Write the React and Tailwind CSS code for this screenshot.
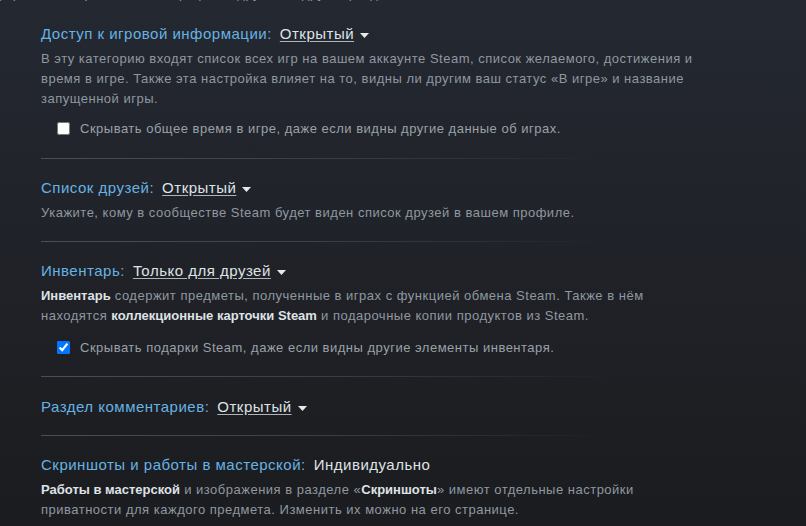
import React from "react";

const Caret = () => (
  <svg width="9" height="5" viewBox="0 0 9 5" className="ml-[6px] mt-[3px]">
    <path d="M0 0 L9 0 L4.5 5 Z" fill="#e6e8ea" />
  </svg>
);

const Title = ({ label, value, dropdown = true }) => (
  <div className="flex items-center text-[15px] leading-[20px] tracking-[0.5px]">
    <span className="text-[#66b3e3]">{label}</span>
    {dropdown ? (
      <span className="flex items-center ml-2">
        <span className="text-[#dfe3e6] underline underline-offset-[2px] decoration-[#aeb4b9]">
          {value}
        </span>
        <Caret />
      </span>
    ) : (
      <span className="ml-2 text-[#dfe3e6]">{value}</span>
    )}
  </div>
);

const Divider = () => (
  <div className="h-px w-[570px] bg-gradient-to-r from-[#4a4f57] via-[#3a3e45] to-transparent" />
);

const Check = ({ checked, label }) => (
  <label className="flex items-center gap-[10px] pl-4 text-[13px] tracking-[0.5px] text-[#9aa1a8]">
    <input
      type="checkbox"
      defaultChecked={checked}
      className="m-0 w-[13px] h-[13px] accent-[#0075ff]"
    />
    <span>{label}</span>
  </label>
);

const desc = "mt-[5px] text-[13px] leading-5 tracking-[0.5px] text-[#8f98a0]";
const strong = "text-[#dfe3e6] tracking-normal";

export default function App() {
  return (
    <div
      className="w-[806px] h-[526px] overflow-hidden bg-gradient-to-b from-[#242831] to-[#1b1c1f]"
      style={{ fontFamily: '"Liberation Sans", Arial, sans-serif' }}
    >
      <div className="pl-[41px] w-[740px] relative">
        {/* хвост предыдущего абзаца, видны только нижние края букв */}
        <p className="absolute -top-[16px] left-[-10px] text-[13px] leading-5 tracking-[0.5px] text-[#8f98a0] whitespace-nowrap">
          ,  управляйте приватностью профиля, друзей, и других разделов
        </p>

        {/* Игровая информация */}
        <div className="pt-[24px]">
          <Title label="Доступ к игровой информации:" value="Открытый" />
          <p className={desc}>
            В эту категорию входят список всех игр на вашем аккаунте Steam, список желаемого, достижения и
            <br />
            время в игре. Также эта настройка влияет на то, видны ли другим ваш статус «В игре» и название
            <br />
            запущенной игры.
          </p>
          <div className="mt-[10px]">
            <Check label="Скрывать общее время в игре, даже если видны другие данные об играх." />
          </div>
        </div>
        <div className="mt-[19px]">
          <Divider />
        </div>

        {/* Друзья */}
        <div className="pt-[19px]">
          <Title label="Список друзей:" value="Открытый" />
          <p className={desc}>
            Укажите, кому в сообществе Steam будет виден список друзей в вашем профиле.
          </p>
        </div>
        <div className="mt-[18px]">
          <Divider />
        </div>

        {/* Инвентарь */}
        <div className="pt-[19px]">
          <Title label="Инвентарь:" value="Только для друзей" />
          <p className={desc}>
            <b className={strong}>Инвентарь</b> содержит предметы, полученные в играх с функцией обмена Steam. Также в нём
            <br />
            находятся <b className={strong}>коллекционные карточки Steam</b> и подарочные копии продуктов из Steam.
          </p>
          <div className="mt-[12px]">
            <Check checked label="Скрывать подарки Steam, даже если видны другие элементы инвентаря." />
          </div>
        </div>
        <div className="mt-[19px]">
          <Divider />
        </div>

        {/* Комментарии */}
        <div className="pt-[20px]">
          <Title label="Раздел комментариев:" value="Открытый" />
        </div>
        <div className="mt-[18px]">
          <Divider />
        </div>

        {/* Скриншоты */}
        <div className="pt-[19px]">
          <Title label="Скриншоты и работы в мастерской:" value="Индивидуально" dropdown={false} />
          <p className={desc}>
            <b className={strong}>Работы в мастерской</b> и изображения в разделе «<b className={strong}>Скриншоты</b>» имеют отдельные настройки
            <br />
            приватности для каждого предмета. Изменить их можно на его странице.
          </p>
        </div>
      </div>
    </div>
  );
}
